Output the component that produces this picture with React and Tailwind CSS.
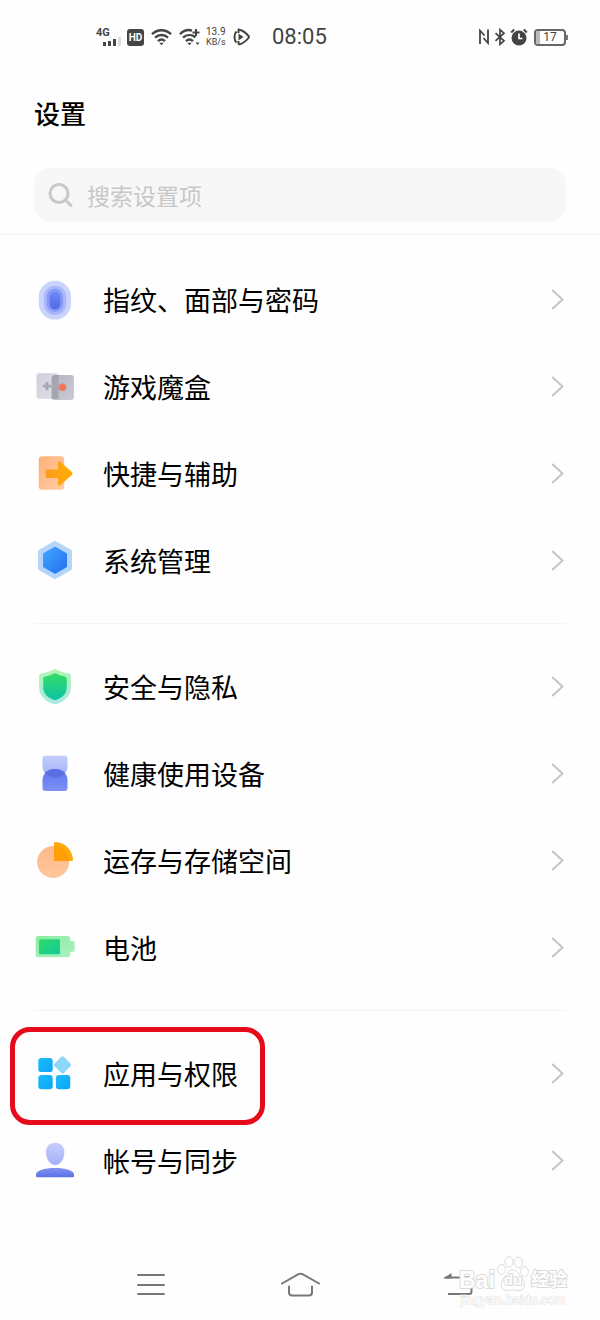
const PasswordIcon = () => (
  <svg viewBox="0 0 40 41" className="w-10 h-[41px]">
    <defs>
      <linearGradient id="fp" x1="0" y1="0" x2="0" y2="1">
        <stop offset="0" stopColor="#6f8af6" />
        <stop offset="1" stopColor="#5468e4" />
      </linearGradient>
    </defs>
    <rect x="3.8" y="1.8" width="32.2" height="38.8" rx="16.1" fill="#c9d3fc" />
    <rect x="8.8" y="6.8" width="22.4" height="29.2" rx="11.2" fill="#a9b8fa" />
    <rect x="11.7" y="9.8" width="16.4" height="23.2" rx="8.2" fill="#869af5" />
    <rect x="14.7" y="12.6" width="10.6" height="17.6" rx="5.3" fill="url(#fp)" />
  </svg>
);

const GameIcon = () => (
  <svg viewBox="0 0 40 41" className="w-10 h-[41px]">
    <defs>
      <linearGradient id="gl" x1="0" y1="0" x2="1" y2="1">
        <stop offset="0" stopColor="#cfd0da" />
        <stop offset="1" stopColor="#dfe0e6" />
      </linearGradient>
      <linearGradient id="gr" x1="0" y1="0" x2="1" y2="1">
        <stop offset="0" stopColor="#b4b5c0" />
        <stop offset="1" stopColor="#c9cad3" />
      </linearGradient>
    </defs>
    <rect x="1.5" y="7.3" width="22" height="25.5" rx="3" fill="url(#gl)" />
    <rect x="16.7" y="9" width="22.2" height="25" rx="3" fill="url(#gr)" />
    <path d="M16.7 12a3 3 0 0 1 3-3h3.8v22.8a1 1 0 0 1-1 1h-5.8z" fill="#a3a5b0" />
    <path d="M10.6 16h2.8v2.7h2.7v2.8h-2.7v2.7h-2.8v-2.7H8v-2.8h2.6z" fill="#a5a8b4" />
    <circle cx="27.4" cy="21.3" r="3.8" fill="#f4745c" />
  </svg>
);

const ShortcutIcon = () => (
  <svg viewBox="0 0 40 41" className="w-10 h-[41px]">
    <defs>
      <linearGradient id="sc" x1="0" y1="0" x2="1" y2="1">
        <stop offset="0" stopColor="#ffb07c" />
        <stop offset="1" stopColor="#ffcda2" />
      </linearGradient>
      <linearGradient id="sa" x1="0" y1="0" x2="1" y2="0">
        <stop offset="0" stopColor="#ff9a1f" />
        <stop offset="1" stopColor="#ffb000" />
      </linearGradient>
    </defs>
    <rect x="3.7" y="3.3" width="25.5" height="33.5" rx="3.5" fill="url(#sc)" />
    <path d="M12.2 16.5H23v-6.600c0-1.600 1.300-2.200 2.400-1.200l11.700 10.500q1.300 1.300 0 2.600L25.400 32.300c-1.100 1-2.400.4-2.400-1.200V25H12.200q-1.500 0-1.500-1.500V18q0-1.500 1.500-1.500z" fill="url(#sa)" />
  </svg>
);

const SystemIcon = () => (
  <svg viewBox="0 0 40 41" className="w-10 h-[41px]">
    <defs>
      <linearGradient id="sy" x1="0" y1="0" x2="1" y2="1">
        <stop offset="0" stopColor="#3fa4ff" />
        <stop offset="1" stopColor="#2672ee" />
      </linearGradient>
    </defs>
    <path d="M20 3 35 11.5v17L20 37 5 28.5v-17z" fill="#b5d5fb" stroke="#b5d5fb" strokeWidth="4" strokeLinejoin="round" />
    <path d="M20 8.2 30.5 14.2v12L20 32.2 9.5 26.2v-12z" fill="url(#sy)" stroke="url(#sy)" strokeWidth="3" strokeLinejoin="round" />
  </svg>
);

const SecurityIcon = () => (
  <svg viewBox="0 0 40 41" className="w-10 h-[41px]">
    <defs>
      <linearGradient id="so" x1="0" y1="0" x2="0" y2="1">
        <stop offset="0" stopColor="#b2f3b4" />
        <stop offset="1" stopColor="#a8eadf" />
      </linearGradient>
      <linearGradient id="si" x1="0" y1="0" x2="0" y2="1">
        <stop offset="0" stopColor="#34dc67" />
        <stop offset="1" stopColor="#0cc2a6" />
      </linearGradient>
    </defs>
    <path d="M18.5 3.4q1.5-.6 3 0c4 2.1 8 3.4 12.5 4.1q1.9.3 1.9 2.2V21c0 8.5-5.5 13.8-14 17q-1.9.7-3.8 0C9.6 34.8 4.1 29.5 4.1 21V9.7q0-1.9 1.9-2.2C10.5 6.8 14.5 5.5 18.5 3.4z" fill="url(#so)" />
    <path d="M18.9 7.6q1.1-.5 2.2 0c3 1.5 6 2.5 9.2 3.1q1.4.3 1.4 1.7v9c0 6-4 9.9-10.3 12.3q-1.4.5-2.8 0C12.3 31.3 8.3 27.4 8.3 21.4v-9q0-1.4 1.4-1.7C12.9 10.1 15.9 9.1 18.9 7.6z" fill="url(#si)" />
  </svg>
);

const HealthIcon = () => (
  <svg viewBox="0 0 40 41" className="w-10 h-[41px]">
    <defs>
      <linearGradient id="ht" x1="0" y1="0" x2="0" y2="1">
        <stop offset="0" stopColor="#c3cdfb" />
        <stop offset="1" stopColor="#a3b1f8" />
      </linearGradient>
      <linearGradient id="hb" x1="0" y1="0" x2="0" y2="1">
        <stop offset="0" stopColor="#5a75ec" />
        <stop offset="1" stopColor="#7d90f7" />
      </linearGradient>
    </defs>
    <path d="M10.5 2.8h19q3 0 3 3v7.7c0 6-5 11-12.500 11S7.500 19.500 7.500 13.500V5.800q0-3 3-3z" fill="url(#ht)" />
    <path d="M20 16c7.500 0 12.500 5 12.500 11v8q0 3-3 3h-19q-3 0-3-3v-8c0-6 5-11 12.500-11z" fill="url(#hb)" />
    <path d="M10 19.700C12.300 17.400 15.800 16 20 16s7.700 1.400 10 3.700c-2.300 3-5.800 4.800-10 4.800s-7.700-1.800-10-4.800z" fill="#5a70e2" />
  </svg>
);

const StorageIcon = () => (
  <svg viewBox="0 0 40 41" className="w-10 h-[41px]">
    <defs>
      <linearGradient id="st" x1="0" y1="0" x2="0" y2="1">
        <stop offset="0" stopColor="#ffb889" />
        <stop offset="1" stopColor="#ffc79c" />
      </linearGradient>
    </defs>
    <circle cx="18.1" cy="22" r="16" fill="url(#st)" />
    <path d="M19 3.2q0-1.200 1.200-1.200C30 2.500 37.500 10 38 19.800q0 1.200-1.200 1.200H19z" fill="#ffa90d" />
    <path d="M19 6c7.500 0 14 6 15 15H19z" fill="#ff9f05" />
  </svg>
);

const BatteryIcon = () => (
  <svg viewBox="0 0 40 41" className="w-10 h-[41px]">
    <defs>
      <linearGradient id="bo" x1="0" y1="0" x2="1" y2="1">
        <stop offset="0" stopColor="#8aed9c" />
        <stop offset="1" stopColor="#aaefc4" />
      </linearGradient>
      <linearGradient id="bi" x1="0" y1="0" x2="1" y2="1">
        <stop offset="0" stopColor="#2fdb68" />
        <stop offset="1" stopColor="#12c998" />
      </linearGradient>
    </defs>
    <path d="M3.5 9h29q2.800 0 2.800 2.800V14h2.200q2.200 0 2.200 2.200v6.600q0 2.200-2.200 2.200h-2.200v2.400q0 2.800-2.800 2.800h-29Q.7 30.200.7 27.400V11.800Q.7 9 3.500 9z" fill="url(#bo)" />
    <rect x="4" y="12.2" width="21" height="15" rx="1.5" fill="url(#bi)" />
  </svg>
);

const AppsIcon = () => (
  <svg viewBox="0 0 40 41" className="w-10 h-[41px]">
    <defs>
      <linearGradient id="ap" x1="0" y1="0" x2="1" y2="1">
        <stop offset="0" stopColor="#1dbcfc" />
        <stop offset="1" stopColor="#0aa4f8" />
      </linearGradient>
    </defs>
    <rect x="3.3" y="4.9" width="14.4" height="14.2" rx="3.2" fill="url(#ap)" />
    <rect x="3.3" y="22" width="14.4" height="14.2" rx="3.2" fill="url(#ap)" />
    <rect x="20.9" y="22" width="14.4" height="14.2" rx="3.2" fill="url(#ap)" />
    <rect x="20.9" y="5.2" width="13.2" height="13.2" rx="2" fill="#8cd6fa" transform="rotate(45 27.5 11.8)" />
  </svg>
);

const AccountIcon = () => (
  <svg viewBox="0 0 40 41" className="w-10 h-[41px]">
    <defs>
      <linearGradient id="ah" x1="0" y1="0" x2="0" y2="1">
        <stop offset="0" stopColor="#c6cffc" />
        <stop offset="1" stopColor="#a2b0f8" />
      </linearGradient>
      <linearGradient id="ab" x1="0" y1="0" x2="0" y2="1">
        <stop offset="0" stopColor="#8094f5" />
        <stop offset="1" stopColor="#5b70e6" />
      </linearGradient>
    </defs>
    <path d="M20.2 2.700c5.600 0 9.200 3.900 9.200 9.300 0 7-4 13-9.200 13s-9.200-6-9.200-13c0-5.400 3.600-9.300 9.200-9.300z" fill="url(#ah)" />
    <path d="M1 36v-1.500c0-4 8.500-6.500 19-6.500s19 2.500 19 6.500V36q0 1.300-1.300 1.300H2.300Q1 37.300 1 36z" fill="url(#ab)" />
  </svg>
);

const groups = [
  [
    { label: '指纹、面部与密码', Icon: PasswordIcon },
    { label: '游戏魔盒', Icon: GameIcon },
    { label: '快捷与辅助', Icon: ShortcutIcon },
    { label: '系统管理', Icon: SystemIcon },
  ],
  [
    { label: '安全与隐私', Icon: SecurityIcon },
    { label: '健康使用设备', Icon: HealthIcon },
    { label: '运存与存储空间', Icon: StorageIcon },
    { label: '电池', Icon: BatteryIcon },
  ],
  [
    { label: '应用与权限', Icon: AppsIcon, marked: true },
    { label: '帐号与同步', Icon: AccountIcon },
  ],
];

function Wifi({ plus }) {
  return (
    <svg viewBox="0 0 21 18" className="w-[21px] h-[18px]" fill="none" stroke="#444" strokeWidth="2.4">
      <path d={plus ? 'M1 6.200C4.500 2.500 9 1.400 13 2.600' : 'M1 6.200c5.400-5.200 13.600-5.200 19 0'} />
      <path d={plus ? 'M4 9.700c3.500-3.200 8.500-3.500 12.500-.5' : 'M4 9.700c3.800-3.600 9.200-3.600 13 0'} />
      <path d="M7 13.200c2.100-2 4.900-2 7 0" />
      <path d="M8.300 14.800h4.400L10.500 17.200z" fill="#444" stroke="none" />
      {plus && <path d="M17 1v7M13.500 4.500h7" strokeWidth="2" />}
      {plus && <path d="M16.500 14.500h4L18.500 17z" fill="#444" stroke="none" />}
    </svg>
  );
}

function StatusBar() {
  return (
    <div className="flex items-center justify-between h-[74px] pl-24 pr-8 text-[#444] font-[Roboto,sans-serif]">
      <div className="flex items-center">
        <div className="w-[26px] mr-[5px]">
          <div className="text-[11px] leading-[9px] font-bold">4G</div>
          <svg viewBox="0 0 26 9" className="w-[26px] h-[9px]" fill="#444">
            <rect x="7" y="5" width="3" height="4" />
            <rect x="12" y="4" width="3" height="5" />
            <rect x="17" y="2" width="3" height="7" />
            <rect x="22" y="0" width="3" height="9" fill="#ddd" />
          </svg>
        </div>
        <div className="w-[17px] h-[17px] rounded-[3px] bg-[#444] text-white text-[10px] leading-[17px] font-bold text-center mr-[7px]">HD</div>
        <Wifi />
        <div className="w-[7px]" />
        <Wifi plus />
        <div className="ml-[6px] mr-[7px] w-5 text-[10px] leading-[10px] whitespace-nowrap">
          <div>13.9</div>
          <div className="text-[9px]">KB/s</div>
        </div>
        <svg viewBox="0 0 17 18" className="w-[17px] h-[18px] mr-[22px]" fill="none" stroke="#444" strokeWidth="2">
          <path d="M3.500 3.500C.8 6 .8 12 3.500 14.500" />
          <path d="M5.500 16.500V13M5.500 5V1.500C9 2 13 5 15.500 8q.8 1 0 2C13 13 9 16 5.500 16.500" strokeLinejoin="round" />
          <path d="M5.500 5.500 10.500 9l-5 3.500z" fill="#444" stroke="none" />
        </svg>
        <div className="text-[22px] leading-[22px]">08:05</div>
      </div>
      <div className="flex items-center gap-1">
        <svg viewBox="0 0 12 18" className="w-3 h-[18px]" fill="none" stroke="#444" strokeWidth="1.8">
          <path d="M2 16V2.500l4.500 5M10 1.500V15L5.500 10" />
        </svg>
        <svg viewBox="0 0 12 18" className="w-3 h-[18px]" fill="none" stroke="#444" strokeWidth="1.7">
          <path d="M1.500 5.200l8.500 7.600-4 3.500V1.700l4 3.500-8.500 7.600" />
        </svg>
        <svg viewBox="0 0 18 18" className="w-[18px] h-[18px] mr-[2px]">
          <circle cx="9" cy="10" r="7.500" fill="#444" />
          <path d="M1.200 4.500 4.200 1.500M16.800 4.500l-3-3" stroke="#444" strokeWidth="2" />
          <path d="M9 5.500v5h3.500" fill="none" stroke="#fff" strokeWidth="1.700" />
        </svg>
        <div className="flex items-center">
          <div className="relative w-8 h-[17px] rounded-[4px] border-2 border-[#666] text-[12px] leading-[13px] text-center">
            <div className="absolute left-0 top-0 w-1 h-full bg-[#bbb]" />
            17
          </div>
          <div className="w-[2px] h-[5px] bg-[#777]" />
        </div>
      </div>
    </div>
  );
}

function Row({ label, Icon, marked }) {
  return (
    <li className="relative">
      <button className="flex items-center w-full h-[87px] pl-[35px] pr-9 text-left">
        <Icon />
        <span className="flex-1 ml-7 text-[27px] leading-9 text-black">{label}</span>
        <svg viewBox="0 0 13 21" className="w-[13px] h-[21px]" fill="none" stroke="#c4c4c4" strokeWidth="2">
          <path d="M1.200 1 11.500 10.500 1.200 20" />
        </svg>
      </button>
      {marked && (
        <div className="absolute left-[10px] -top-[3px] w-[255px] h-[98px] rounded-[20px] border-5 border-[#e60a1a] pointer-events-none" />
      )}
    </li>
  );
}

function Watermark() {
  return (
    <div className="absolute right-[33px] bottom-3 w-[108px] pointer-events-none font-['Liberation_Sans','Noto_Sans_CJK_SC',sans-serif] text-white">
      <div className="flex items-end justify-between h-9 font-bold whitespace-nowrap">
        <span className="text-[23px] leading-6 [-webkit-text-stroke:2px_#dcdcdc] [paint-order:stroke]">Bai</span>
        <div className="relative w-8 h-9 shrink-0">
          <svg viewBox="0 0 32 36" className="w-8 h-9" fill="#fff" stroke="#dcdcdc" strokeWidth="1">
            <ellipse cx="4.500" cy="13.500" rx="3.800" ry="5" />
            <ellipse cx="12" cy="6" rx="4" ry="5.300" />
            <ellipse cx="21.500" cy="6.500" rx="4" ry="5.300" />
            <ellipse cx="27.500" cy="15.500" rx="3.800" ry="5" />
            <path d="M16 14c5 0 6 5 9.500 8.500 3.500 3.300 3 12-3.500 12-3 0-4-.7-6-.7s-3 .7-6 .7c-6.500 0-7-8.700-3.500-12C10 19 11 14 16 14z" />
          </svg>
          <span className="absolute inset-x-0 bottom-1 text-center text-[15px] leading-4 [-webkit-text-stroke:2px_#dcdcdc] [paint-order:stroke]">du</span>
        </div>
        <span className="text-[18px] leading-6 [-webkit-text-stroke:2px_#dcdcdc] [paint-order:stroke]">经验</span>
      </div>
      <div className="text-[13px] leading-[16px] text-center whitespace-nowrap [-webkit-text-stroke:1px_#dedede] [paint-order:stroke]">jingyan.baidu.com</div>
    </div>
  );
}

function NavBar() {
  return (
    <nav className="relative mt-auto flex items-center justify-between h-[70px] px-[126px]">
      <button aria-label="菜单">
        <svg viewBox="0 0 48 30" className="w-12 h-[30px]" stroke="#777" strokeWidth="2" strokeLinecap="round">
          <path d="M12 5h26M12 15h26M12 24h26" />
        </svg>
      </button>
      <button aria-label="主页">
        <svg viewBox="0 0 48 30" className="w-12 h-[30px]" fill="none" stroke="#777" strokeWidth="2" strokeLinecap="round" strokeLinejoin="round">
          <path d="M6 13.500 22.500 4.200q2-1 4 0L43 13.500M13 16.500v6q0 3 3 3h17q3 0 3-3v-6" />
        </svg>
      </button>
      <button aria-label="返回">
        <svg viewBox="0 0 48 30" className="w-12 h-[30px]" fill="none" stroke="#777" strokeWidth="2">
          <path d="M19 7.500h24q2.500 0 2.500 2.500v11.500q0 2.500-2.500 2.500H22" />
          <path d="M17 8.500 25.500 3v5.500z" fill="#777" stroke="none" />
        </svg>
      </button>
      <Watermark />
    </nav>
  );
}

export default function App() {
  return (
    <div className="flex flex-col min-h-screen bg-[#fefefe] font-['Noto_Sans_CJK_SC',sans-serif]">
      <StatusBar />
      <header className="px-[34px] pb-3 border-b border-[#f3f3f3]">
        <h1 className="pt-5 text-[26px] leading-[38px] font-medium text-black">设置</h1>
        <label className="flex items-center h-[54px] mt-9 px-[14px] gap-[13px] rounded-2xl bg-[#f7f7f7]">
          <svg viewBox="0 0 26 26" className="w-[26px] h-[26px] shrink-0" fill="none" stroke="#c8c8c8" strokeWidth="3" strokeLinecap="round">
            <circle cx="11" cy="11.500" r="9" />
            <path d="M17.500 18 23 23.500" />
          </svg>
          <input
            type="text"
            aria-label="搜索设置项"
            placeholder="搜索设置项"
            className="flex-1 min-w-0 bg-transparent text-[23px] leading-8 placeholder:text-[#c8c8c8] outline-none"
          />
        </label>
      </header>
      <main className="pt-[21px]">
        {groups.map((items, i) => (
          <section key={i}>
            {i > 0 && <hr className="mx-[34px] my-[19px] border-t border-[#f3f3f3]" />}
            <ul>
              {items.map(item => <Row key={item.label} {...item} />)}
            </ul>
          </section>
        ))}
      </main>
      <NavBar />
    </div>
  );
}
